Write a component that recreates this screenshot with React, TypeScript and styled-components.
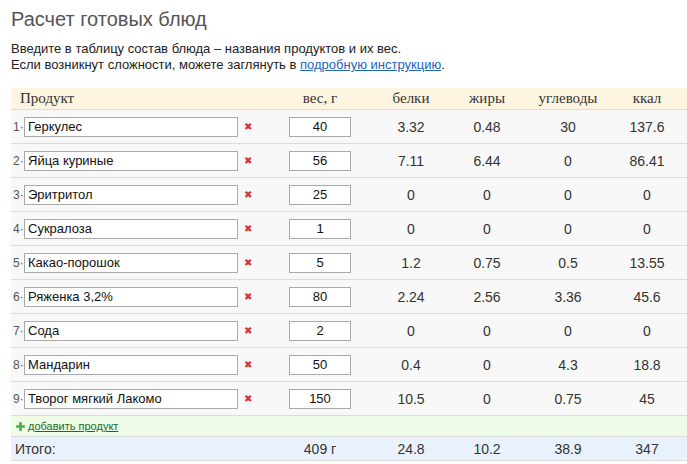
import React from "react";
import styled, { createGlobalStyle } from "styled-components";

interface Item {
  name: string;
  weight: number;
  protein: string;
  fat: string;
  carbs: string;
  kcal: string;
}

const items: Item[] = [
  { name: "Геркулес", weight: 40, protein: "3.32", fat: "0.48", carbs: "30", kcal: "137.6" },
  { name: "Яйца куриные", weight: 56, protein: "7.11", fat: "6.44", carbs: "0", kcal: "86.41" },
  { name: "Эритритол", weight: 25, protein: "0", fat: "0", carbs: "0", kcal: "0" },
  { name: "Сукралоза", weight: 1, protein: "0", fat: "0", carbs: "0", kcal: "0" },
  { name: "Какао-порошок", weight: 5, protein: "1.2", fat: "0.75", carbs: "0.5", kcal: "13.55" },
  { name: "Ряженка 3,2%", weight: 80, protein: "2.24", fat: "2.56", carbs: "3.36", kcal: "45.6" },
  { name: "Сода", weight: 2, protein: "0", fat: "0", carbs: "0", kcal: "0" },
  { name: "Мандарин", weight: 50, protein: "0.4", fat: "0", carbs: "4.3", kcal: "18.8" },
  { name: "Творог мягкий Лакомо", weight: 150, protein: "10.5", fat: "0", carbs: "0.75", kcal: "45" },
];

const GlobalStyle = createGlobalStyle`
  body {
    margin: 0;
    background: #fff;
    font-family: "Liberation Sans", Arial, sans-serif;
    color: #222;
  }
`;

const Page = styled.div`
  padding: 9px 0 0 11px;
  width: 676px;
`;

const Title = styled.h1`
  margin: 0;
  font-size: 20px;
  font-weight: normal;
  color: #555;
  line-height: 20px;
`;

const Intro = styled.p`
  margin: 12px 0 0;
  font-size: 13px;
  line-height: 16px;
  color: #222;

  a {
    color: #2266bb;
    text-decoration: underline;
  }
`;

const Table = styled.div`
  margin-top: 15px;
  display: grid;
  grid-template-columns: 269px 80px 89px 76px 86px 76px;
`;

const Row = styled.div<{ $bg: string; $height: number }>`
  display: contents;

  & > * {
    background: ${(p) => p.$bg};
    height: ${(p) => p.$height}px;
    border-bottom: 1px solid #dcdcdc;
    box-sizing: border-box;
    display: flex;
    align-items: center;
  }
`;

const HeadCell = styled.div<{ $left?: boolean; $first?: boolean; $last?: boolean }>`
  font-family: "Liberation Serif", "Times New Roman", serif;
  font-size: 15px;
  color: #333;
  justify-content: ${(p) => (p.$left ? "flex-start" : "center")};
  padding-left: ${(p) => (p.$left ? "9px" : p.$first ? "13px" : "0")};
  padding-right: ${(p) => (p.$last ? "4px" : "0")};
`;

const NumCell = styled.div<{ $first?: boolean; $last?: boolean }>`
  justify-content: center;
  font-size: 14px;
  color: #333;
  padding-left: ${(p) => (p.$first ? "13px" : "0")};
  padding-right: ${(p) => (p.$last ? "4px" : "0")};
`;

const ProductCell = styled.div`
  padding-left: 2px;
`;

const Index = styled.span`
  font-size: 12px;
  color: #555;
  width: 11px;
`;

const TextInput = styled.input<{ $width: number; $center?: boolean }>`
  width: ${(p) => p.$width}px;
  height: 20px;
  box-sizing: border-box;
  border: 1px solid #a9a9a9;
  background: #fff;
  padding: 0 3px;
  font-family: "Liberation Sans", Arial, sans-serif;
  font-size: 13px;
  color: #111;
  text-align: ${(p) => (p.$center ? "center" : "left")};
  outline: none;
`;

const Remove = styled.span`
  margin-left: 6px;
  color: #d0334a;
  font-size: 10px;
  line-height: 1;
  font-family: "DejaVu Sans", sans-serif;
  font-weight: bold;
`;

const AddCell = styled.div`
  grid-column: 1 / -1;
  padding-left: 5px;
  gap: 3px;
  font-size: 11px;

  a {
    color: #1f6a1f;
    text-decoration: underline;
  }
`;

const TotalLabel = styled.div`
  padding-left: 4px;
  font-size: 14px;
  color: #333;
`;

function PlusIcon() {
  return (
    <svg width="9" height="9" viewBox="0 0 9 9">
      <path
        d="M3.5 0.5h2v3h3v2h-3v3h-2v-3h-3v-2h3z"
        fill="#4cae3c"
        stroke="#4cae3c"
        strokeWidth="0.6"
        strokeLinejoin="round"
      />
    </svg>
  );
}

export default function App() {
  const totalWeight = items.reduce((s, i) => s + i.weight, 0);
  return (
    <>
      <GlobalStyle />
      <Page>
        <Title>Расчет готовых блюд</Title>
        <Intro>
          Введите в таблицу состав блюда – названия продуктов и их вес.
          <br />
          Если возникнут сложности, можете заглянуть в <a href="#">подробную инструкцию</a>.
        </Intro>
        <Table>
          <Row $bg="#fdf5df" $height={22}>
            <HeadCell $left>Продукт</HeadCell>
            <HeadCell>вес, г</HeadCell>
            <HeadCell $first>белки</HeadCell>
            <HeadCell>жиры</HeadCell>
            <HeadCell>углеводы</HeadCell>
            <HeadCell $last>ккал</HeadCell>
          </Row>
          {items.map((item, i) => (
            <Row key={item.name} $bg="#f8f8f8" $height={34}>
              <ProductCell>
                <Index>{i + 1}·</Index>
                <TextInput $width={214} defaultValue={item.name} />
                <Remove>✖</Remove>
              </ProductCell>
              <NumCell>
                <TextInput $width={62} $center defaultValue={String(item.weight)} />
              </NumCell>
              <NumCell $first>{item.protein}</NumCell>
              <NumCell>{item.fat}</NumCell>
              <NumCell>{item.carbs}</NumCell>
              <NumCell $last>{item.kcal}</NumCell>
            </Row>
          ))}
          <Row $bg="#edfbe7" $height={21}>
            <AddCell>
              <PlusIcon />
              <a href="#">добавить продукт</a>
            </AddCell>
          </Row>
          <Row $bg="#e9f2fc" $height={24}>
            <TotalLabel>Итого:</TotalLabel>
            <NumCell>{totalWeight} г</NumCell>
            <NumCell $first>24.8</NumCell>
            <NumCell>10.2</NumCell>
            <NumCell>38.9</NumCell>
            <NumCell $last>347</NumCell>
          </Row>
        </Table>
      </Page>
    </>
  );
}
